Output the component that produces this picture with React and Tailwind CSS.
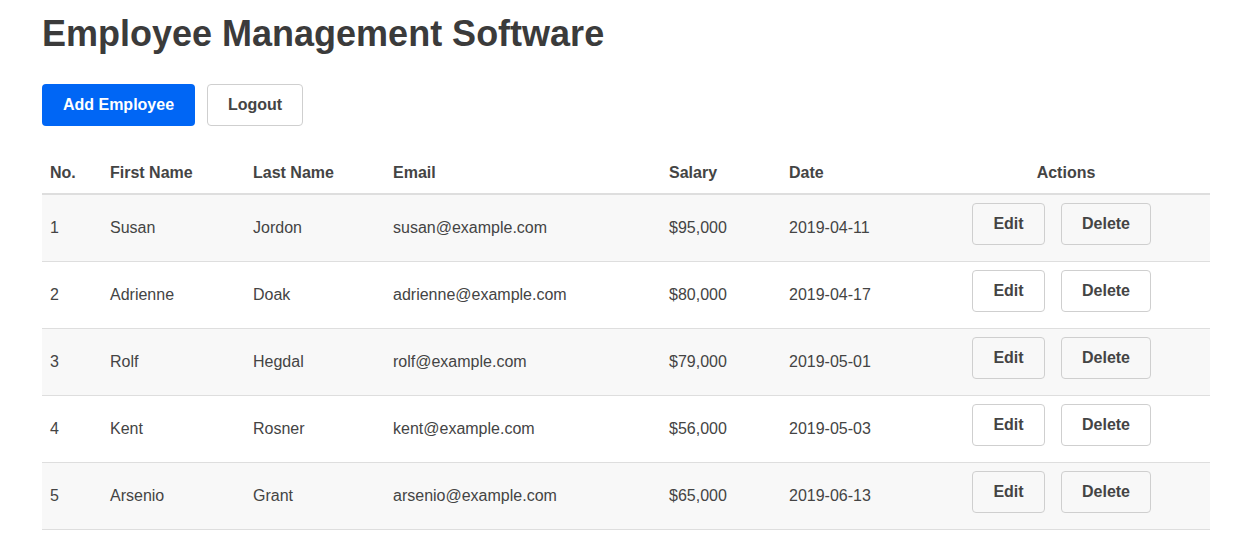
import React from "react";

const rows = [
  [1, "Susan", "Jordon", "susan@example.com", "$95,000", "2019-04-11"],
  [2, "Adrienne", "Doak", "adrienne@example.com", "$80,000", "2019-04-17"],
  [3, "Rolf", "Hegdal", "rolf@example.com", "$79,000", "2019-05-01"],
  [4, "Kent", "Rosner", "kent@example.com", "$56,000", "2019-05-03"],
  [5, "Arsenio", "Grant", "arsenio@example.com", "$65,000", "2019-06-13"],
];

export default function App() {
  return (
    <div className="min-h-screen bg-white text-[#444] pl-[42px] pr-[39px]" style={{ fontFamily: '"Liberation Sans", Arial, sans-serif' }}>
      <h1 className="text-[36px] font-bold leading-none text-[#3b3b3b] pt-[16px] m-0">Employee Management Software</h1>
      <div className="flex gap-[12px] mt-[32px]">
        <button className="h-[42px] w-[153px] rounded-[4px] bg-[#0066f5] text-white font-bold text-[16px]">Add Employee</button>
        <button className="h-[42px] w-[96px] rounded-[4px] bg-white border border-[#cfcfcf] text-[#444] font-bold text-[16px]">Logout</button>
      </div>
      <table className="w-[1168px] mt-[26px] border-collapse table-fixed text-[16px]">
        <colgroup>
          <col className="w-[60px]" />
          <col className="w-[143px]" />
          <col className="w-[140px]" />
          <col className="w-[276px]" />
          <col className="w-[120px]" />
          <col className="w-[141px]" />
          <col className="w-[288px]" />
        </colgroup>
        <thead>
          <tr className="h-[42px] border-b-2 border-[#dedede]">
            <th className="text-left font-bold px-[8px]">No.</th>
            <th className="text-left font-bold px-[8px]">First Name</th>
            <th className="text-left font-bold px-[8px]">Last Name</th>
            <th className="text-left font-bold px-[8px]">Email</th>
            <th className="text-left font-bold px-[8px]">Salary</th>
            <th className="text-left font-bold px-[8px]">Date</th>
            <th className="text-center font-bold px-[8px]">Actions</th>
          </tr>
        </thead>
        <tbody>
          {rows.map((r, i) => (
            <tr key={r[0]} className={`h-[67px] border-b border-[#dedede] ${i % 2 === 0 ? "bg-[#f8f8f8]" : "bg-white"}`}>
              {r.map((c, j) => (
                <td key={j} className="px-[8px] pt-[1px]">{c}</td>
              ))}
              <td className="px-[8px] pb-[7px]">
                <div className="flex gap-[16px] pl-[42px]">
                  <button className="h-[42px] w-[73px] rounded-[4px] border border-[#cfcfcf] bg-transparent text-[#444] font-bold text-[16px]">Edit</button>
                  <button className="h-[42px] w-[90px] rounded-[4px] border border-[#cfcfcf] bg-transparent text-[#444] font-bold text-[16px]">Delete</button>
                </div>
              </td>
            </tr>
          ))}
        </tbody>
      </table>
    </div>
  );
}
